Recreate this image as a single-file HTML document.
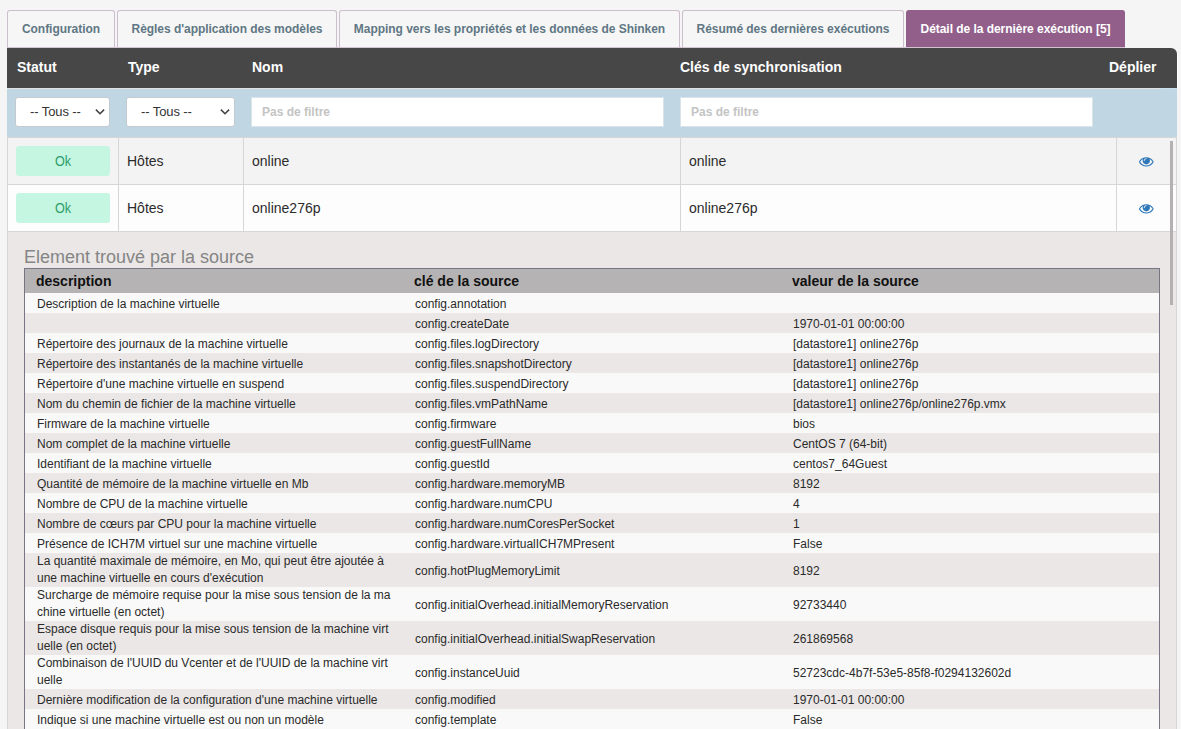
<!DOCTYPE html>
<html lang="fr">
<head>
<meta charset="utf-8">
<title>Détail de la dernière exécution</title>
<style>
*{box-sizing:border-box;margin:0;padding:0}
html,body{width:1181px;height:729px;overflow:hidden;background:#f5f5f5;font-family:"Liberation Sans",Arial,sans-serif;color:#222}
body{position:relative}
.tabline{position:absolute;left:7px;top:47px;width:1118px;height:1px;background:#d3c4d2;z-index:2}
.tab{position:absolute;top:10px;height:37px;border:1px solid #cdbecd;border-bottom:none;border-radius:3px 3px 0 0;background:#f6f6f6;color:#5f7784;font-weight:bold;font-size:12px;letter-spacing:-0.04px;line-height:36px;text-align:center;white-space:nowrap}
.tab.active{background:#925f8b;border-color:#925f8b;color:#fff}
.thead{position:absolute;left:7px;top:48px;width:1170px;height:40px;background:#474747;border-radius:0 6px 0 0}
.thead span{position:absolute;top:-1px;line-height:41px;color:#fff;font-weight:bold;font-size:14px;white-space:nowrap}
.filters{position:absolute;left:7px;top:88px;width:1170px;height:50px;background:#c0d7e3}
.sel{position:absolute;top:97px;height:30px;background:#fff;border:1px solid #c3cacf;border-radius:3px;font-size:13px;letter-spacing:-0.1px;line-height:28px;color:#333;padding-left:14px;white-space:nowrap}
.sel svg{position:absolute;right:3.5px;top:10px}
.inp{position:absolute;top:97px;height:30px;background:#fff;border:1px solid #d9e4ea;font-size:12px;font-weight:bold;line-height:28px;color:#c4c4c4;padding-left:10px;white-space:nowrap}
.row{position:absolute;left:7px;width:1170px;height:47px;border-bottom:1px solid #d6d6d6}
.row .t{position:absolute;top:0;font-size:14px;line-height:46px;color:#2b2b2b;white-space:nowrap}
.row .v{position:absolute;top:0;width:1px;height:46px;background:#d6d6d6}
.row .eye{position:absolute;left:1132.2px;top:15.6px}
.hl{position:absolute;left:7px;width:1170px;height:1px;background:#d6d6d6}
.ok{position:absolute;left:9px;top:8px;width:94px;height:30px;background:#c4f6e1;border-radius:3px;color:#2f9d6c;font-size:14px;line-height:30px;text-align:center}
.detail{position:absolute;left:7px;top:232px;width:1170px;height:497px;background:#eae7e6}
.vl,.vr{position:absolute;top:138px;width:1px;height:591px;background:#d6d6d6}
.vl{left:7px}.vr{left:1176px}
h3{position:absolute;left:24px;top:247px;font-size:18px;font-weight:normal;color:#858585;line-height:21px;white-space:nowrap}
.inner{position:absolute;left:24px;top:268px;width:1136px;height:470px;border:1px solid #787684;background:#f9f9f9}
.ih{position:absolute;left:0;top:0;width:1134px;height:24px;background:#b5b3b3}
.ih span{position:absolute;top:0;line-height:24px;font-size:14px;font-weight:bold;color:#111;white-space:nowrap}
.r{position:absolute;left:0;width:1134px;font-size:12px;color:#2a2a2a}
.r.o{background:#f9f9f9}
.r.e{background:#eae7e6}
.r span{position:absolute;top:1px;white-space:nowrap}
.r .a{left:12px}.r .b{left:390px}.r .d{left:768px}
.h1{height:20px;line-height:20px}
.h2{height:34px;line-height:17px}
.h2 .b,.h2 .d{line-height:34px}
.r.h2 .a{top:0}
.sb{position:absolute;left:1170px;top:141px;width:3px;height:164px;background:#b3b1b1}
.ok span{display:inline-block;transform:scaleX(.9)}
.fl1{position:absolute;left:7px;top:88px;width:1154px;height:1px;background:#e0e2e3}
.fl2{position:absolute;left:1161px;top:88px;width:16px;height:1px;background:#c8e0ee}
.wl{position:absolute;left:1177px;top:54px;width:1px;height:34px;background:#fff}
</style>
</head>
<body>
<div class="tabline"></div>
<div class="tab" style="left:7px;width:108px">Configuration</div>
<div class="tab" style="left:117px;width:220px">Règles d'application des modèles</div>
<div class="tab" style="left:339px;width:341px">Mapping vers les propriétés et les données de Shinken</div>
<div class="tab" style="left:682px;width:222px">Résumé des dernières exécutions</div>
<div class="tab active" style="left:906px;width:219px">Détail de la dernière exécution [5]</div>
<div class="thead">
<span style="left:10px">Statut</span>
<span style="left:121px">Type</span>
<span style="left:245px">Nom</span>
<span style="left:673px">Clés de synchronisation</span>
<span style="left:1102px">Déplier</span>
</div>
<div class="filters"></div>
<div class="fl1"></div><div class="fl2"></div><div class="wl"></div>
<div class="sel" style="left:15px;width:95px">-- Tous --<svg width="12" height="8" viewBox="0 0 12 8"><path d="M1.9 1.6 L6 5.7 L10.1 1.6" fill="none" stroke="#444" stroke-width="1.6"/></svg></div>
<div class="sel" style="left:126px;width:109px">-- Tous --<svg width="12" height="8" viewBox="0 0 12 8"><path d="M1.9 1.6 L6 5.7 L10.1 1.6" fill="none" stroke="#444" stroke-width="1.6"/></svg></div>
<div class="inp" style="left:251px;width:413px">Pas de filtre</div>
<div class="inp" style="left:680px;width:413px">Pas de filtre</div>
<div class="row" style="top:138px;background:#f3f3f3">
<div class="ok"><span>Ok</span></div>
<span class="t" style="left:120px">Hôtes</span><span class="t" style="left:245px">online</span><span class="t" style="left:682px">online</span>
<i class="v" style="left:111px"></i><i class="v" style="left:236px"></i><i class="v" style="left:673px"></i><i class="v" style="left:1109px"></i>
<svg class="eye" width="14.6" height="14.6" viewBox="0 0 1792 1792"><path fill="#2e77b9" d="M1664 960q-152-236-381-353 61 104 61 225 0 185-131.5 316.500t-316.500 131.500-316.500-131.500-131.500-316.500q0-121 61-225-229 117-381 353 133 205 333.500 326.500t434.500 121.500 434.500-121.500 333.500-326.500zm-720-384q0-20-14-34t-34-14q-125 0-214.500 89.500t-89.500 214.500q0 20 14 34t34 14 34-14 14-34q0-86 61-147t147-61q20 0 34-14t14-34zm848 384q0 34-20 69-140 230-376.500 368.500t-499.500 138.500-499.500-139-376.500-368q-20-35-20-69t20-69q140-229 376.500-368t499.500-139 499.500 139 376.500 368q20 35 20 69z"/></svg>
</div>
<div class="row" style="top:185px;background:#fdfdfd">
<div class="ok"><span>Ok</span></div>
<span class="t" style="left:120px">Hôtes</span><span class="t" style="left:245px">online276p</span><span class="t" style="left:682px">online276p</span>
<i class="v" style="left:111px"></i><i class="v" style="left:236px"></i><i class="v" style="left:673px"></i><i class="v" style="left:1109px"></i>
<svg class="eye" width="14.6" height="14.6" viewBox="0 0 1792 1792"><path fill="#2e77b9" d="M1664 960q-152-236-381-353 61 104 61 225 0 185-131.5 316.500t-316.500 131.500-316.500-131.500-131.500-316.500q0-121 61-225-229 117-381 353 133 205 333.500 326.500t434.500 121.500 434.500-121.500 333.500-326.500zm-720-384q0-20-14-34t-34-14q-125 0-214.500 89.500t-89.500 214.500q0 20 14 34t34 14 34-14 14-34q0-86 61-147t147-61q20 0 34-14t14-34zm848 384q0 34-20 69-140 230-376.500 368.500t-499.500 138.500-499.500-139-376.500-368q-20-35-20-69t20-69q140-229 376.500-368t499.500-139 499.500 139 376.500 368q20 35 20 69z"/></svg>
</div>
<div class="hl" style="top:137px"></div>
<div class="detail"></div>
<div class="vl"></div><div class="vr"></div>
<h3>Element trouvé par la source</h3>
<div class="inner">
<div class="ih"><span style="left:11px">description</span><span style="left:389px">clé de la source</span><span style="left:767px">valeur de la source</span></div>
<div class="r o h1" style="top:24px"><span class="a">Description de la machine virtuelle</span><span class="b">config.annotation</span><span class="d"></span></div>
<div class="r e h1" style="top:44px"><span class="a"></span><span class="b">config.createDate</span><span class="d">1970-01-01 00:00:00</span></div>
<div class="r o h1" style="top:64px"><span class="a">Répertoire des journaux de la machine virtuelle</span><span class="b">config.files.logDirectory</span><span class="d">[datastore1] online276p</span></div>
<div class="r e h1" style="top:84px"><span class="a">Répertoire des instantanés de la machine virtuelle</span><span class="b">config.files.snapshotDirectory</span><span class="d">[datastore1] online276p</span></div>
<div class="r o h1" style="top:104px"><span class="a">Répertoire d'une machine virtuelle en suspend</span><span class="b">config.files.suspendDirectory</span><span class="d">[datastore1] online276p</span></div>
<div class="r e h1" style="top:124px"><span class="a">Nom du chemin de fichier de la machine virtuelle</span><span class="b">config.files.vmPathName</span><span class="d">[datastore1] online276p/online276p.vmx</span></div>
<div class="r o h1" style="top:144px"><span class="a">Firmware de la machine virtuelle</span><span class="b">config.firmware</span><span class="d">bios</span></div>
<div class="r e h1" style="top:164px"><span class="a">Nom complet de la machine virtuelle</span><span class="b">config.guestFullName</span><span class="d">CentOS 7 (64-bit)</span></div>
<div class="r o h1" style="top:184px"><span class="a">Identifiant de la machine virtuelle</span><span class="b">config.guestId</span><span class="d">centos7_64Guest</span></div>
<div class="r e h1" style="top:204px"><span class="a">Quantité de mémoire de la machine virtuelle en Mb</span><span class="b">config.hardware.memoryMB</span><span class="d">8192</span></div>
<div class="r o h1" style="top:224px"><span class="a">Nombre de CPU de la machine virtuelle</span><span class="b">config.hardware.numCPU</span><span class="d">4</span></div>
<div class="r e h1" style="top:244px"><span class="a">Nombre de cœurs par CPU pour la machine virtuelle</span><span class="b">config.hardware.numCoresPerSocket</span><span class="d">1</span></div>
<div class="r o h1" style="top:264px"><span class="a">Présence de ICH7M virtuel sur une machine virtuelle</span><span class="b">config.hardware.virtualICH7MPresent</span><span class="d">False</span></div>
<div class="r e h2" style="top:284px"><span class="a">La quantité maximale de mémoire, en Mo, qui peut être ajoutée à<br>une machine virtuelle en cours d'exécution</span><span class="b">config.hotPlugMemoryLimit</span><span class="d">8192</span></div>
<div class="r o h2" style="top:318px"><span class="a">Surcharge de mémoire requise pour la mise sous tension de la ma<br>chine virtuelle (en octet)</span><span class="b">config.initialOverhead.initialMemoryReservation</span><span class="d">92733440</span></div>
<div class="r e h2" style="top:352px"><span class="a">Espace disque requis pour la mise sous tension de la machine virt<br>uelle (en octet)</span><span class="b">config.initialOverhead.initialSwapReservation</span><span class="d">261869568</span></div>
<div class="r o h2" style="top:386px"><span class="a">Combinaison de l'UUID du Vcenter et de l'UUID de la machine virt<br>uelle</span><span class="b">config.instanceUuid</span><span class="d">52723cdc-4b7f-53e5-85f8-f0294132602d</span></div>
<div class="r e h1" style="top:420px"><span class="a">Dernière modification de la configuration d'une machine virtuelle</span><span class="b">config.modified</span><span class="d">1970-01-01 00:00:00</span></div>
<div class="r o h1" style="top:440px"><span class="a">Indique si une machine virtuelle est ou non un modèle</span><span class="b">config.template</span><span class="d">False</span></div>
</div>
<div class="sb"></div>
</body>
</html>
